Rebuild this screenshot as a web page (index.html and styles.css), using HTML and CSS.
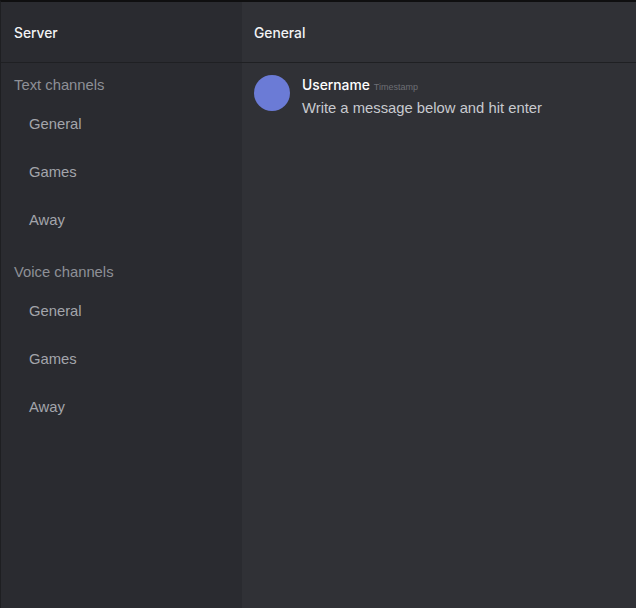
FILE: index.html
```html
<!DOCTYPE html>
<html>
<head>
<meta charset="utf-8">
<link rel="stylesheet" href="styles.css">
</head>
<body>
<div class="app">
  <aside class="sidebar">
    <div class="header">Server</div>
    <div class="section">
      <div class="section-title">Text channels</div>
      <div class="channel">General</div>
      <div class="channel">Games</div>
      <div class="channel">Away</div>
    </div>
    <div class="section">
      <div class="section-title">Voice channels</div>
      <div class="channel">General</div>
      <div class="channel">Games</div>
      <div class="channel">Away</div>
    </div>
  </aside>
  <main class="main">
    <div class="header">General</div>
    <div class="messages">
      <div class="message">
        <div class="avatar"></div>
        <div class="body">
          <div class="meta"><span class="username">Username</span><span class="timestamp">Timestamp</span></div>
          <div class="text">Write a message below and hit enter</div>
        </div>
      </div>
    </div>
  </main>
</div>
</body>
</html>
```
FILE: styles.css
```css
* { box-sizing: border-box; }
html, body { margin: 0; height: 100%; }
body {
  background: #0f0f10;
  font-family: "Liberation Sans", Arial, sans-serif;
  font-size: 14.8px;
}
.app {
  display: flex;
  height: 100%;
  border-top: 2px solid #0f0f10;
  border-left: 1px solid #1e1f22;
}
.sidebar {
  width: 241px;
  background: #2a2b30;
  display: flex;
  flex-direction: column;
}
.main {
  flex: 1;
  background: #303136;
  display: flex;
  flex-direction: column;
}
.header {
  height: 61px;
  padding-top: 2px;
  border-bottom: 1px solid #1f2023;
  display: flex;
  align-items: center;
  padding-left: 13px;
  color: #f2f3f5;
  font-family: "Inter", "Liberation Sans", sans-serif;
  font-size: 13.8px;
  font-weight: 500;
}
.main .header { padding-left: 12px; }
.section { padding-top: 12px; }
.section + .section { padding-top: 18px; }
.section-title {
  color: #8e9097;
  line-height: 20px;
  padding-left: 13px;
  margin-bottom: 5px;
}
.channel {
  height: 48px;
  line-height: 48px;
  padding-left: 28px;
  color: #a3a5ab;
}
.messages { padding: 12px 12px; }
.message { display: flex; gap: 12px; }
.avatar {
  width: 36px;
  height: 36px;
  border-radius: 50%;
  background: #6b7bd6;
  flex: none;
}
.meta { display: flex; align-items: baseline; gap: 4px; line-height: 20px; margin-top: 0; }
.username {
  color: #ffffff;
  font-family: "Inter", "Liberation Sans", sans-serif;
  font-size: 13.8px;
  font-weight: 500;
}
.timestamp { color: #6d6f75; font-size: 9px; }
.text { color: #c8cacf; line-height: 20px; margin-top: 1px; }
```
